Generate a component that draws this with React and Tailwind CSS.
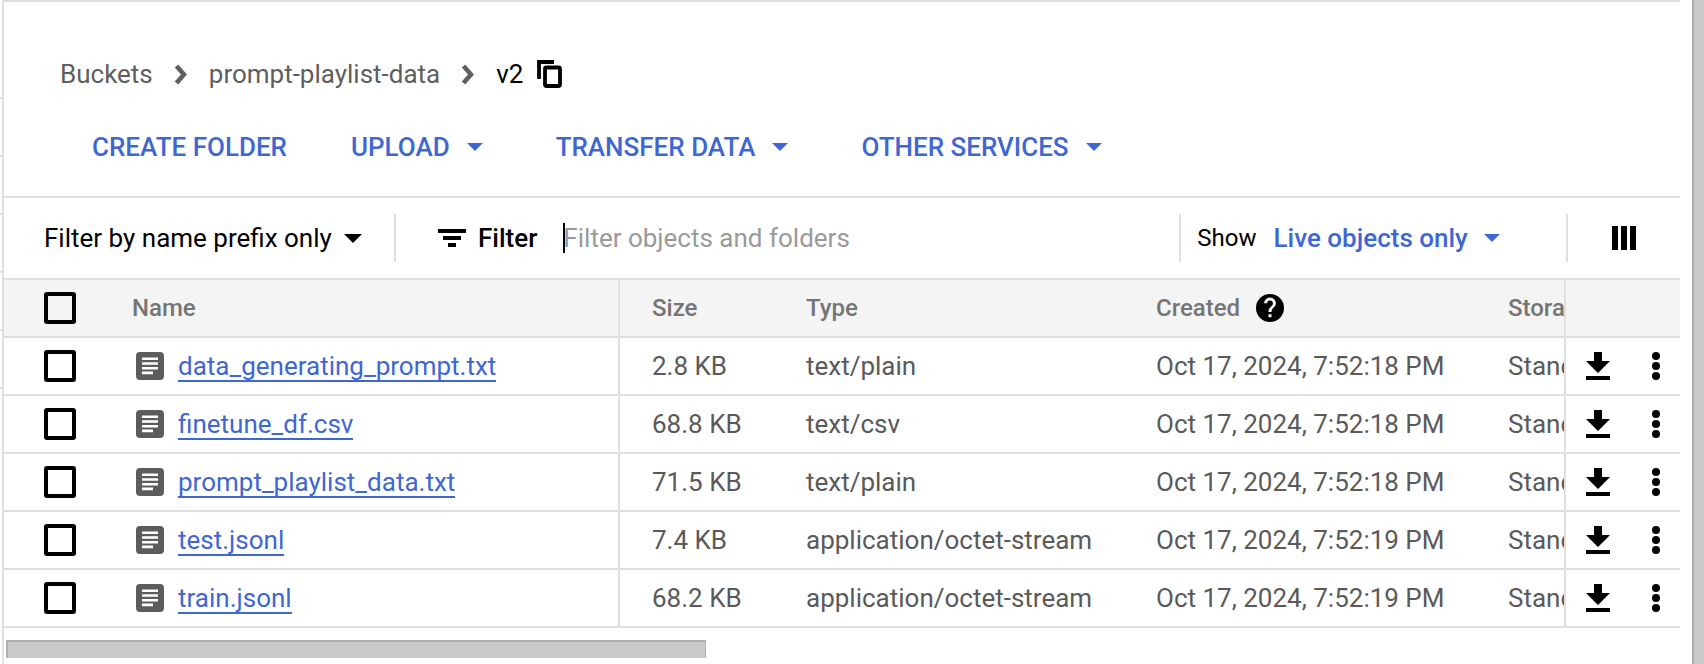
const BLUE = "text-[#3f67d3]";

const rows = [
  ["data_generating_prompt.txt", "2.8 KB", "text/plain", "Oct 17, 2024, 7:52:18 PM"],
  ["finetune_df.csv", "68.8 KB", "text/csv", "Oct 17, 2024, 7:52:18 PM"],
  ["prompt_playlist_data.txt", "71.5 KB", "text/plain", "Oct 17, 2024, 7:52:18 PM"],
  ["test.jsonl", "7.4 KB", "application/octet-stream", "Oct 17, 2024, 7:52:19 PM"],
  ["train.jsonl", "68.2 KB", "application/octet-stream", "Oct 17, 2024, 7:52:19 PM"],
];

function Caret({ className }) {
  return (
    <svg viewBox="0 0 20 10" className={className} fill="currentColor">
      <path d="M0 0h20L10 10z" />
    </svg>
  );
}

function Chevron() {
  return (
    <svg viewBox="0 0 13 21" className="h-[21px] w-[13px] shrink-0 text-[#5f5f5f]" fill="none" stroke="currentColor" strokeWidth="4.6">
      <path d="M2.500 2l7.500 8.500L2.500 19" />
    </svg>
  );
}

function Check() {
  return <div className="h-8 w-8 shrink-0 rounded-[3px] border-4 border-black" />;
}

function DocIcon() {
  return (
    <svg viewBox="0 0 28 28" className="h-7 w-7 shrink-0">
      <rect width="28" height="28" rx="4" fill="#5c5c5c" />
      <path d="M6 5.500h16v2.600H6zM6 10.200h16v2.600H6zM6 14.900h16v2.600H6zM6 19.600h11v2.600H6z" fill="#fff" />
    </svg>
  );
}

function Download() {
  return (
    <svg viewBox="0 0 24 28" className="h-7 w-6 shrink-0" fill="#000">
      <path d="M8 0h8v9h8L12 21 0 9h8zM0 24h24v4H0z" />
    </svg>
  );
}

function Dots() {
  return (
    <svg viewBox="0 0 8 28" className="h-7 w-2 shrink-0" fill="#000">
      <circle cx="4" cy="4" r="4" />
      <circle cx="4" cy="14" r="4" />
      <circle cx="4" cy="24" r="4" />
    </svg>
  );
}

function Row({ row }) {
  return (
    <div className="flex h-[58px] border-b-2 border-[#e0e0e0] text-[#5a5a5a]">
      <div className="flex w-[129px] shrink-0 items-center pl-10">
        <Check />
      </div>
      <div className="flex w-[487px] shrink-0 items-center gap-[14px] border-r-2 border-[#e0e0e0] pl-[3px]">
        <DocIcon />
        <a className={`${BLUE} border-b-2 border-[#3f67d3] pt-[2px] leading-[28px]`}>{row[0]}</a>
      </div>
      <div className="flex w-[186px] shrink-0 items-center pl-8">{row[1]}</div>
      <div className="flex w-[350px] shrink-0 items-center">{row[2]}</div>
      <div className="flex w-[352px] shrink-0 items-center">{row[3]}</div>
      <div className="flex w-[56px] shrink-0 items-center overflow-hidden whitespace-nowrap">Standard</div>
      <div className="flex flex-1 items-center border-l-2 border-[#e0e0e0] pl-5">
        <Download />
        <div className="ml-[42px]">
          <Dots />
        </div>
      </div>
    </div>
  );
}

export default function App() {
  return (
    <div className="flex h-[664px] w-[1704px] overflow-hidden bg-white font-['Roboto',sans-serif] text-[26px] leading-7">
      <div className="flex w-[2px] shrink-0 flex-col gap-[56px] pt-[97px]">
        {[0, 1, 2, 3, 4, 5].map((i) => (
          <div key={i} className="h-[2px] shrink-0 bg-[#e0e0e0]" />
        ))}
      </div>
      <main className="flex w-[1678px] shrink-0 flex-col border-t-2 border-l-2 border-[#e0e0e0]">
        <nav className="flex h-[146px] flex-col">
          <div className="flex items-center pl-14 pt-[58px] text-[#5f5f5f]">
            <span>Buckets</span>
            <span className="ml-[21px]"><Chevron /></span>
            <span className="ml-[22px]">prompt-playlist-data</span>
            <span className="ml-[21px]"><Chevron /></span>
            <span className="ml-[22px] text-black">v2</span>
            <svg viewBox="0 0 25 28" className="ml-[14px] h-7 w-[25px] text-black" fill="none" stroke="currentColor" strokeWidth="3.8">
              <path d="M2 19V2h15" />
              <rect x="8" y="7.500" width="15" height="18.500" rx="1.500" />
            </svg>
          </div>
          <div className={`mt-[45px] flex items-center pl-[88px] font-medium ${BLUE}`}>
            <span>CREATE FOLDER</span>
            <span className="ml-[64px]">UPLOAD</span>
            <Caret className="ml-[17px] h-2 w-4" />
            <span className="ml-[73px]">TRANSFER DATA</span>
            <Caret className="ml-[17px] h-2 w-4" />
            <span className="ml-[73px]">OTHER SERVICES</span>
            <Caret className="ml-[17px] h-2 w-4" />
          </div>
        </nav>
        <div className="mt-[48px] flex h-[84px] items-center border-y-2 border-[#e0e0e0]">
          <div className="flex w-[390px] shrink-0 items-center pl-10 text-black">
            <span>Filter by name prefix only</span>
            <Caret className="ml-[11px] h-[9px] w-5" />
          </div>
          <div className="h-12 w-[2px] shrink-0 bg-[#e0e0e0]" />
          <svg viewBox="0 0 28 18" className="ml-[42px] h-[18px] w-7 shrink-0" fill="#000">
            <path d="M0 0h28v4H0zM5 7h18v4H5zM10 14h8v4h-8z" />
          </svg>
          <span className="ml-3 font-medium text-black">Filter</span>
          <div className="ml-[26px] -mr-[2px] h-[30px] w-[2px] shrink-0 bg-black" />
          <span className="w-[616px] shrink-0 text-[#9a9a9a]">Filter objects and folders</span>
          <div className="h-12 w-[2px] shrink-0 bg-[#e0e0e0]" />
          <span className="ml-4 text-[24px] text-black">Show</span>
          <span className={`ml-[17px] font-medium ${BLUE}`}>Live objects only</span>
          <Caret className={`ml-4 h-2 w-4 ${BLUE}`} />
          <div className="ml-[66px] h-12 w-[2px] shrink-0 bg-[#e0e0e0]" />
          <svg viewBox="0 0 24 24" className="ml-[44px] h-6 w-6 shrink-0" fill="#000">
            <path d="M0 0h6v24H0zM9 0h6v24H9zM18 0h6v24h-6z" />
          </svg>
        </div>
        <div className="flex h-[58px] border-b-2 border-[#e0e0e0] bg-[#f4f4f4] font-medium text-[24px] text-[#757575]">
          <div className="flex w-[128px] shrink-0 items-center pl-10">
            <Check />
          </div>
          <div className="flex w-[488px] shrink-0 items-center border-r-2 border-[#e0e0e0]">Name</div>
          <div className="flex w-[186px] shrink-0 items-center pl-8">Size</div>
          <div className="flex w-[350px] shrink-0 items-center">Type</div>
          <div className="flex w-[352px] shrink-0 items-center gap-4">
            <span>Created</span>
            <svg viewBox="0 0 24 24" className="h-7 w-7" fill="#000">
              <path d="M12 0a12 12 0 1 0 0 24 12 12 0 0 0 0-24zm1.300 20h-2.600v-2.600h2.600zm2.700-9.200-1.200 1.200c-1 1-1.500 1.700-1.500 3.500h-2.600V15c0-1.300.5-2.600 1.500-3.500l1.600-1.600c.4-.5.7-1.100.7-1.900a2.500 2.500 0 0 0-5 0H6.900a5.100 5.100 0 0 1 10.200 0c0 1.100-.5 2.100-1.100 2.800z" />
            </svg>
          </div>
          <div className="flex w-[56px] shrink-0 items-center overflow-hidden whitespace-nowrap">Storage class</div>
          <div className="flex-1 border-l-2 border-[#e0e0e0]" />
        </div>
        {rows.map((r) => (
          <Row key={r[0]} row={r} />
        ))}
        <div className="mt-3 ml-[2px] h-[18px] w-[700px] border-t-2 border-l-2 border-r border-[#b0b0b0] bg-[#c9c9c9]" />
      </main>
      <div className="ml-3 w-3 shrink-0 border-l-2 border-[#b0b0b0] bg-[#c9c9c9]" />
    </div>
  );
}
